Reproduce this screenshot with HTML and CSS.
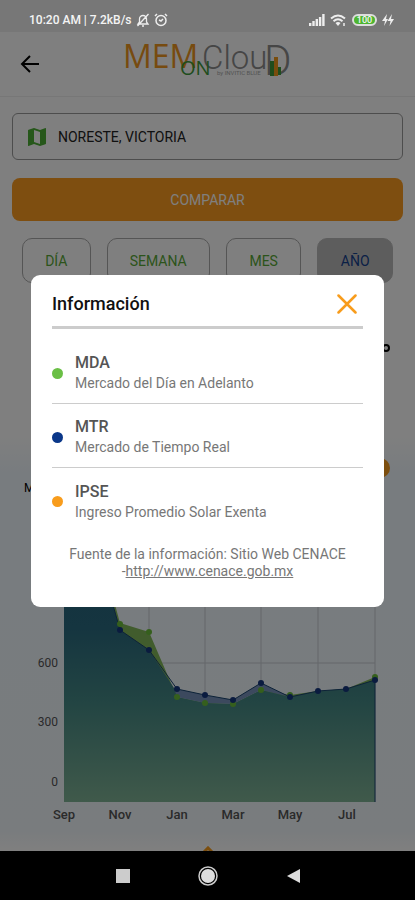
FILE: index.html
```html
<!DOCTYPE html>
<html lang="es">
<head>
    <meta charset="UTF-8">
    <meta name="viewport" content="width=device-width, initial-scale=1.0">
    <title>MEM ON Cloud</title>
    <link rel="stylesheet" href="styles.css">
</head>
<body>

<div class="screen">
    <div class="statusbar">
        <span>10:20 AM | 7.2kB/s</span>
        <svg class="status-icon" width="14" height="14" viewBox="0 0 14 14" fill="none" stroke="#eee" stroke-width="1.3">
            <path d="M2 11h10L10.500 9V6a3.500 3.500 0 0 0-7 0v3zM6 13h2M12.500 1l-11 12"/>
        </svg>
        <svg class="status-icon" width="14" height="14" viewBox="0 0 14 14" fill="none" stroke="#eee" stroke-width="1.5">
            <circle cx="7" cy="7.500" r="5"/>
            <path d="M5 7l2 1 2-2M1 3l2-2M13 3l-2-2"/>
        </svg>
        <div class="status-right">
            <svg width="16" height="12" viewBox="0 0 16 12" fill="#eee">
                <path d="M0 9h2.400v3H0zM3.300 7h2.400v5H3.300zM6.600 5H9v7H6.600zM9.900 3h2.400v9H9.900zM13.200 0h2.400v12h-2.400z"/>
            </svg>
            <svg width="17" height="13" viewBox="0 0 17 13" fill="none" stroke="#eee" stroke-width="2">
                <path d="M1 4.500q7-6 14 0M3.500 7.300q4.500-4 9 0"/>
                <path d="M5.500 9q2.500-2 5 0L8 12z" fill="#eee" stroke="none"/>
                <path d="M14 9v3" stroke-width="1.500"/>
            </svg>
            <span class="battery">100</span>
            <svg width="12" height="12" viewBox="0 0 12 12" fill="#eee">
                <path d="M5 0L0 7h3l-1 5 4-7H4zM10 0L5.500 7h3l-1 5 4.500-7H9z"/>
            </svg>
        </div>
    </div>

    <header class="header">
        <button class="back" aria-label="Regresar">
            <svg width="20" height="20" viewBox="0 0 20 20" fill="none" stroke="#000" stroke-width="2">
                <path d="M10 2L2 10l8 8M2 10h17"/>
            </svg>
        </button>
        <svg class="logo" width="170" height="40" viewBox="0 0 170 40">
            <text class="logo-mem" x="0" y="28">MEM</text>
            <text class="logo-cloud" x="79" y="29">Clou</text>
            <text class="logo-d" x="141" y="35">D</text>
            <text class="logo-on" x="57" y="35">ON</text>
            <text class="logo-sub" x="94" y="35">by INVITIC BLUE</text>
            <path fill="#3f9a3a" d="M147 21h4v15h-4zM155 27h3v8h-3z"/>
            <path fill="#f39a1a" d="M151 17h4v19h-4z"/>
        </svg>
    </header>

    <main class="content">
        <div class="field">
            <label for="zona" aria-label="Zona">
                <svg width="18" height="18" viewBox="0 0 18 18">
                    <path fill="#4cae34" fill-rule="evenodd" d="M17.500 0L12 2 6 0 .600 1.800Q0 2 0 2.500v15q0 .600.600.500L6 16l6 2 5.400-1.800q.600-.200.600-.700V.500q0-.500-.500-.500zM6 2l6 2v12l-6-2z"/>
                </svg>
            </label>
            <input type="text" id="zona" value="NORESTE, VICTORIA">
        </div>
        <button class="compare">COMPARAR</button>
        <div class="periods">
            <button class="period">DÍA</button>
            <button class="period">SEMANA</button>
            <button class="period">MES</button>
            <button class="period active">AÑO</button>
        </div>
        <div class="next">
            <svg width="12" height="12" viewBox="0 0 12 12" fill="none" stroke="#000" stroke-width="2">
                <circle cx="7" cy="6" r="3"/>
            </svg>
        </div>
    </main>

    <section class="chart">
        <div class="chart-head">
            <span class="unit">MXN</span>
            <button class="info" aria-label="Información"></button>
        </div>
        <svg class="plot" viewBox="0 0 415 330">
            <defs>
                <linearGradient id="area" x1="0" y1="0" x2="0" y2="1">
                    <stop offset="0" stop-color="#26607c"/>
                    <stop offset="0.400" stop-color="#2a6a80"/>
                    <stop offset="0.660" stop-color="#468a86"/>
                    <stop offset="1" stop-color="#80b496"/>
                </linearGradient>
            </defs>
            <path class="grid" d="M149 20v282M205 20v282M261 20v282M318 20v282M375 20v282M64 104h311M64 163h311"/>
            <path fill="#83b95a" d="M64 10L92 20 120 123 149 132 177 197 205 203 233 204 261 190 290 195 318 191 346 189 375 177V302H64z"/>
            <path fill="#7893bd" d="M172 188L177 189 205 195 233 200 261 183 290 197 261 190 233 204 205 203 177 197z"/>
            <path fill="url(#area)" d="M64 10L92 30 120 130 149 150 174 188 177 197 205 203 233 204 261 190 290 197 318 191 346 189 375 180V302H64z"/>
            <path class="line" d="M92 30L120 130 149 150 177 189 205 195 233 200 261 183 290 197 318 191 346 189 375 180V302"/>
            <g fill="#6bbf3a">
                <circle cx="120" cy="124" r="3"/><circle cx="149" cy="132" r="3"/>
                <circle cx="177" cy="197" r="3"/><circle cx="205" cy="203" r="3"/>
                <circle cx="233" cy="204" r="3"/><circle cx="261" cy="190" r="3"/>
                <circle cx="290" cy="195" r="3"/><circle cx="375" cy="177" r="3"/>
            </g>
            <g fill="#14367f">
                <circle cx="120" cy="130" r="3"/><circle cx="149" cy="150" r="3"/>
                <circle cx="177" cy="189" r="3"/><circle cx="205" cy="195" r="3"/>
                <circle cx="233" cy="200" r="3"/><circle cx="261" cy="183" r="3"/>
                <circle cx="290" cy="197" r="3"/><circle cx="318" cy="191" r="3"/>
                <circle cx="346" cy="189" r="3"/><circle cx="375" cy="180" r="3"/>
            </g>
            <g class="axis-y">
                <text x="58" y="107">900</text>
                <text x="58" y="167">600</text>
                <text x="58" y="226">300</text>
                <text x="58" y="286">0</text>
            </g>
            <g class="axis-x">
                <text x="64" y="319">Sep</text>
                <text x="120" y="319">Nov</text>
                <text x="177" y="319">Jan</text>
                <text x="233" y="319">Mar</text>
                <text x="290" y="319">May</text>
                <text x="347" y="319">Jul</text>
            </g>
        </svg>
    </section>
    <div class="more">
        <svg width="14" height="14" viewBox="0 0 14 14" fill="none" stroke="#f89c1c" stroke-width="3">
            <path d="M1 8l6-6 6 6"/>
        </svg>
    </div>

    <div class="overlay">
        <div class="modal" role="dialog" aria-labelledby="titulo">
            <div class="modal-head">
                <h2 id="titulo">Información</h2>
                <button class="close" aria-label="Cerrar">
                    <svg width="20" height="20" viewBox="0 0 20 20" stroke="#f89c1c" stroke-width="2.500" stroke-linecap="round">
                        <path d="M1.500 1.500l17 17M18.500 1.500l-17 17"/>
                    </svg>
                </button>
            </div>
            <ul class="legend">
                <li>
                    <span class="dot green"></span>
                    <div>
                        <h3>MDA</h3>
                        <p>Mercado del Día en Adelanto</p>
                    </div>
                </li>
                <li>
                    <span class="dot blue"></span>
                    <div>
                        <h3>MTR</h3>
                        <p>Mercado de Tiempo Real</p>
                    </div>
                </li>
                <li>
                    <span class="dot orange"></span>
                    <div>
                        <h3>IPSE</h3>
                        <p>Ingreso Promedio Solar Exenta</p>
                    </div>
                </li>
            </ul>
            <p class="source">Fuente de la información: Sitio Web CENACE<br>-<a href="http://www.cenace.gob.mx">http://www.cenace.gob.mx</a></p>
        </div>
    </div>
</div>

<nav class="navbar">
    <button aria-label="Recientes">
        <svg width="20" height="20" viewBox="0 0 20 20"><path fill="#ccc" d="M3 3h14v14H3z"/></svg>
    </button>
    <button aria-label="Inicio">
        <svg width="20" height="20" viewBox="0 0 20 20">
            <circle cx="10" cy="10" r="9" fill="none" stroke="#ccc" stroke-width="1.500"/>
            <circle cx="10" cy="10" r="7" fill="#ddd"/>
        </svg>
    </button>
    <button aria-label="Atrás">
        <svg width="20" height="20" viewBox="0 0 20 20"><path fill="#ddd" d="M17 3v14L4 10z"/></svg>
    </button>
</nav>

</body>
</html>
```
FILE: styles.css
```css
* {
    box-sizing: border-box;
}
body {
    font-family: Roboto, sans-serif;
    margin: 0;
    display: flex;
    flex-direction: column;
    height: 100vh;
    background-color: #000;
}
button {
    font-family: inherit;
    padding: 0;
    border: none;
    background: none;
    cursor: pointer;
}
svg {
    display: block;
}
.screen {
    position: relative;
    flex: 1;
    min-height: 0;
    overflow: hidden;
    display: flex;
    flex-direction: column;
    background-color: #fff;
}
.statusbar {
    position: relative;
    z-index: 2;
    flex: none;
    display: flex;
    align-items: center;
    gap: 4px;
    height: 32px;
    padding: 8px 21px 0 29px;
    background-color: #777;
    color: #f4f4f4;
    font-size: 12px;
    font-weight: 500;
}
.status-right {
    margin-left: auto;
    display: flex;
    align-items: center;
    gap: 5px;
}
.battery {
    width: 25px;
    height: 12px;
    border: 2px solid #ddd;
    border-radius: 6px;
    background-color: #4db530;
    font-size: 9px;
    line-height: 8px;
    text-align: center;
}
.header {
    flex: none;
    display: flex;
    align-items: center;
    justify-content: center;
    position: relative;
    height: 65px;
    border-bottom: 1px solid #eee;
}
.back {
    position: absolute;
    left: 20px;
    top: 22px;
}
.logo {
    margin-bottom: 8px;
    overflow: visible;
}
.logo-mem {
    font: 32px "Open Sans", sans-serif;
    fill: #ee961e;
}
.logo-on {
    font: 20px "Open Sans", sans-serif;
    fill: #3f9a3a;
}
.logo-cloud {
    font: 300 33px Roboto, sans-serif;
    fill: #8c8c8c;
}
.logo-d {
    font: 300 42px Roboto, sans-serif;
    fill: #8c8c8c;
}
.logo-sub {
    font: 6px Roboto, sans-serif;
    fill: #a8a8a8;
}
.content {
    flex: none;
    height: 338px;
    padding: 16px 12px 0;
}
.field {
    display: flex;
    align-items: center;
    gap: 12px;
    height: 47px;
    padding: 0 15px;
    border: 1px solid #9a9a9a;
    border-radius: 6px;
}
.field input {
    flex: 1;
    min-width: 0;
    padding: 0;
    border: none;
    outline: none;
    background: none;
    color: #222;
    font: 14px Roboto, sans-serif;
}
.compare {
    width: 100%;
    height: 43px;
    margin-top: 18px;
    border-radius: 8px;
    background-color: #fc9c20;
    color: #fff;
    font-size: 14px;
}
.periods {
    display: grid;
    grid-template-columns: 69fr 104fr 76fr 76fr;
    gap: 16px;
    margin-top: 17px;
    padding: 0 10px;
}
.period {
    height: 45px;
    border: 1px solid #aaa;
    border-radius: 10px;
    color: #58a836;
    font-size: 14px;
}
.period.active {
    border-color: #bbb;
    background-color: #bbb;
    color: #14408c;
}
.next {
    display: flex;
    justify-content: flex-end;
    margin-top: 59px;
    padding-right: 12px;
}
.chart {
    flex: none;
    background: linear-gradient(#fff, #f0f8ff 40px, #f2f8fc);
}
.chart-head {
    display: flex;
    align-items: center;
    justify-content: space-between;
    height: 65px;
    padding: 0 25px 0 24px;
}
.unit {
    padding-top: 40px;
    font-size: 12px;
    color: #000;
}
.info {
    width: 20px;
    height: 20px;
    border-radius: 50%;
    background-color: #f89c1c;
}
.plot {
    width: 100%;
}
.grid {
    fill: none;
    stroke: #c8ced4;
}
.line {
    fill: none;
    stroke: #1a4570;
}
.axis-y {
    font-size: 12px;
    text-anchor: end;
    fill: #555;
}
.axis-x {
    font-size: 13px;
    font-weight: 500;
    text-anchor: middle;
    fill: #555;
}
.more {
    display: flex;
    justify-content: center;
    flex: none;
    height: 40px;
    padding-top: 16px;
    background: linear-gradient(#f2f8fc, #fff 20px);
}
.overlay {
    position: absolute;
    inset: 0;
    display: flex;
    align-items: center;
    justify-content: center;
    padding: 32px 31px 2px;
    background-color: rgba(0, 0, 0, 0.5);
}
.modal {
    width: 100%;
    max-width: 480px;
    padding: 0 21px 27px;
    border-radius: 9px;
    background-color: #fff;
}
.modal-head {
    display: flex;
    align-items: center;
    justify-content: space-between;
    height: 54px;
    padding: 7px 6px 0 0;
    border-bottom: 3px solid #ccc;
}
.modal-head h2 {
    margin: 0;
    font-size: 18px;
    font-weight: 500;
    color: #111;
}
.legend {
    list-style: none;
    margin: 0;
    padding: 11px 0 0;
}
.legend li {
    display: flex;
    align-items: center;
    gap: 12px;
    height: 64px;
    padding-top: 4px;
    border-bottom: 1px solid #ccc;
}
.legend li:last-child {
    border-bottom: none;
}
.legend h3 {
    margin: 0;
    font-size: 16px;
    line-height: 20px;
    font-weight: 500;
    color: #555;
}
.legend p {
    margin: 0;
    font-size: 14px;
    line-height: 20px;
    color: #777;
}
.dot {
    width: 11px;
    height: 11px;
    border-radius: 50%;
}
.dot.green {
    background-color: #6abf45;
}
.dot.blue {
    background-color: #0a3789;
}
.dot.orange {
    background-color: #f89c1c;
}
.source {
    margin: 14px 0 0;
    font-size: 14px;
    line-height: 17px;
    text-align: center;
    color: #777;
}
.source a {
    color: inherit;
}
.navbar {
    flex: none;
    display: flex;
    align-items: center;
    justify-content: center;
    gap: 65px;
    height: 49px;
    background-color: #000;
}
```
